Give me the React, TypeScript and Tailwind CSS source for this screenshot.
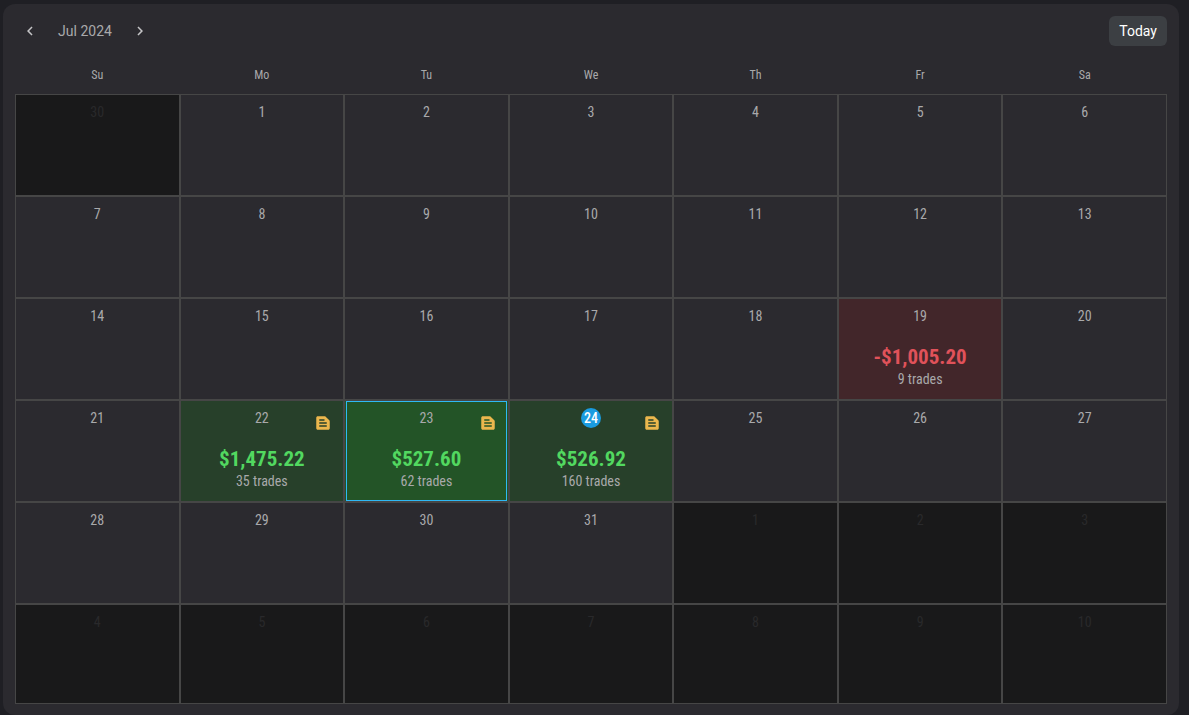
import React from 'react';
import { MdChevronLeft, MdChevronRight, MdTextSnippet } from 'react-icons/md';
import clsx from 'clsx';

type Result = {
  pnl: string;
  trades: number;
  loss?: boolean;
  note?: boolean;
};

const weekdays = ['Su', 'Mo', 'Tu', 'We', 'Th', 'Fr', 'Sa'];

const results: Record<number, Result> = {
  19: { pnl: '-$1,005.20', trades: 9, loss: true },
  22: { pnl: '$1,475.22', trades: 35, note: true },
  23: { pnl: '$527.60', trades: 62, note: true },
  24: { pnl: '$526.92', trades: 160, note: true },
};

const today = 24;
const selected = 23;

// July 2024 starts on a Monday, so the grid begins with June 30
const weeks = Array.from({ length: 6 }, (_, week) =>
  Array.from({ length: 7 }, (_, weekday) => {
    const offset = week * 7 + weekday;
    if (offset < 1) return { day: 30, outside: true };
    if (offset > 31) return { day: offset - 31, outside: true };
    return { day: offset, outside: false };
  })
);

function DayCell({ day, outside }: { day: number; outside: boolean }) {
  const result = outside ? undefined : results[day];
  const isToday = !outside && day === today;
  const isSelected = !outside && day === selected;

  return (
    <td
      className={clsx(
        'relative border border-[#464646] px-px py-0 align-top text-center',
        outside && 'bg-[#19191a] text-[#29292b]',
        !outside && 'text-[#a9a9ab]',
        result && !result.loss && !isSelected && 'bg-[#27402a]',
        result?.loss && 'bg-[#42262a]',
        isSelected && 'bg-[#235427]'
      )}
    >
      <div
        className={clsx(
          'flex h-full flex-col items-center border pt-[6px]',
          isSelected ? 'min-h-[100px] border-[#2fb8f5]' : 'border-transparent'
        )}
      >
        <span
          className={clsx(
            'flex size-5 items-center justify-center rounded-full text-sm leading-5',
            isToday && 'bg-[#1a9be0] font-medium text-white'
          )}
        >
          {day}
        </span>
        {result && (
          <>
            <span
              className={clsx(
                'mt-[17px] text-[21px] leading-7 font-bold',
                result.loss ? 'text-[#e0525a]' : 'text-[#52d860]'
              )}
            >
              {result.pnl}
            </span>
            <span className="text-sm leading-4">{result.trades} trades</span>
          </>
        )}
      </div>
      {result?.note && (
        <MdTextSnippet size={18} className="absolute top-[13px] right-[11px] text-[#ebb74d]" />
      )}
    </td>
  );
}

export default function App() {
  return (
    <div className="min-h-screen bg-[#1f1f24] pt-1 pr-[10px] pl-[3px] font-['Roboto',sans-serif]">
      <main className="rounded-xl bg-[#2b2a2f] px-3 pt-3 pb-[11px]">
        <header className="flex h-[30px] items-center justify-between">
          <div className="flex items-center text-sm text-[#a9a9ab]">
            <button type="button" aria-label="Previous month" className="flex size-[30px] items-center justify-center text-[#c4c4c6]">
              <MdChevronLeft size={18} />
            </button>
            <h1 className="w-20 text-center">Jul 2024</h1>
            <button type="button" aria-label="Next month" className="flex size-[30px] items-center justify-center text-[#c4c4c6]">
              <MdChevronRight size={18} />
            </button>
          </div>
          <button type="button" className="h-[30px] rounded-md bg-[#3c3f43] px-[10px] text-sm text-white">
            Today
          </button>
        </header>

        <table className="mt-3 w-full table-fixed border-separate border-spacing-0 font-['Roboto_Condensed','Liberation_Sans_Narrow',Roboto,sans-serif]">
          <thead>
            <tr className="h-9">
              {weekdays.map((weekday) => (
                <th key={weekday} scope="col" className="p-0 pb-0.5 text-xs font-normal text-[#a9a9ab]">
                  {weekday}
                </th>
              ))}
            </tr>
          </thead>
          <tbody>
            {weeks.map((week, index) => (
              <tr key={index} className="h-[102px] last:h-[100px]">
                {week.map(({ day, outside }) => (
                  <DayCell key={day} day={day} outside={outside} />
                ))}
              </tr>
            ))}
          </tbody>
        </table>
      </main>
    </div>
  );
}
